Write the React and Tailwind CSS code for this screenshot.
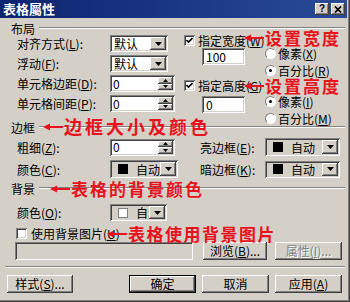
import React from "react";

const SUNKEN =
  "shadow-[inset_1px_1px_0_#808080,inset_-1px_-1px_0_#ffffff,inset_2px_2px_0_#404040,inset_-2px_-2px_0_#d4d0c8]";
const RAISED =
  "shadow-[inset_-1px_-1px_0_#404040,inset_1px_1px_0_#ffffff,inset_-2px_-2px_0_#808080,inset_2px_2px_0_#d4d0c8]";

const U = ({ children }) => <span className="underline">{children}</span>;

const Lbl = ({ children, className = "" }) => (
  <div className={`shrink-0 whitespace-nowrap leading-[13px] ${className}`}>{children}</div>
);

const DropBtn = () => (
  <div className={`${RAISED} bg-[#d4d0c8] w-[16px] h-full shrink-0 flex items-center justify-center`}>
    <svg width="7" height="4" viewBox="0 0 7 4">
      <path d="M0 0H7L3.5 4Z" fill="#000" />
    </svg>
  </div>
);

const Select = ({ className, children }) => (
  <div className={`${SUNKEN} bg-white p-[2px] flex shrink-0 ${className}`}>
    <div className="flex-1 flex items-center pl-[2px] whitespace-nowrap leading-[12px]">{children}</div>
    <DropBtn />
  </div>
);

const ColorSelect = ({ className, white = false }) => (
  <div className={`${SUNKEN} bg-[#d4d0c8] p-[2px] flex shrink-0 ${className}`}>
    <div
      className={`flex-1 min-w-0 flex items-center pl-[6px] whitespace-nowrap ${
        white ? "overflow-x-clip" : ""
      }`}
    >
      <div
        className={`w-[10px] h-[10px] shrink-0 ${
          white ? "bg-white border border-[#808080]" : "bg-black"
        }`}
      />
      <span className="ml-[8px] leading-[13px] shrink-0">自动</span>
    </div>
    <DropBtn />
  </div>
);

const Spinner = ({ className }) => (
  <div className={`${SUNKEN} bg-white p-[2px] flex shrink-0 ${className}`}>
    <div className="flex-1 flex items-center pl-[1px] leading-[12px]">0</div>
    <div className="w-[15px] flex flex-col">
      <div className={`${RAISED} bg-[#d4d0c8] flex-1 flex items-center justify-center`}>
        <svg width="5" height="3" viewBox="0 0 5 3">
          <path d="M2.5 0L5 3H0Z" fill="#000" />
        </svg>
      </div>
      <div className={`${RAISED} bg-[#d4d0c8] flex-1 flex items-center justify-center`}>
        <svg width="5" height="3" viewBox="0 0 5 3">
          <path d="M0 0H5L2.5 3Z" fill="#000" />
        </svg>
      </div>
    </div>
  </div>
);

const Check = ({ checked }) => (
  <div className={`${SUNKEN} bg-white w-[11px] h-[11px] shrink-0 flex items-center justify-center`}>
    {checked && (
      <svg width="7" height="7" viewBox="0 0 7 7">
        <path d="M0.5 3L2.5 5L6.5 1" stroke="#000" strokeWidth="1.6" fill="none" />
      </svg>
    )}
  </div>
);

const Radio = ({ checked }) => (
  <div className="w-[11px] h-[11px] shrink-0 rounded-full bg-white border border-t-[#808080] border-l-[#808080] border-b-white border-r-white flex items-center justify-center">
    {checked && <div className="w-[3px] h-[3px] rounded-full bg-black" />}
  </div>
);

const Button = ({ className, children, disabled = false, def = false }) => (
  <div className={`${def ? "border border-black" : ""} shrink-0 ${className}`}>
    <div
      className={`${RAISED} bg-[#d4d0c8] w-full h-full flex items-center justify-center leading-[12px] whitespace-nowrap ${
        disabled ? "text-[#808080] [text-shadow:1px_1px_0_#ffffff]" : ""
      }`}
    >
      {children}
    </div>
  </div>
);

const Header = ({ children, className = "" }) => (
  <div className={`h-[12px] flex items-center ${className}`}>
    <Lbl>{children}</Lbl>
    <div className="flex-1 ml-[4px] border-t border-t-[#808080] border-b border-b-white" />
  </div>
);

const Arrow = ({ w = 20 }) => (
  <svg width={w} height="10" viewBox={`0 0 ${w} 10`} className="shrink-0">
    <path d="M0 5L7 1.5L7 8.5Z" fill="#e8121c" />
    <path d={`M5 5H${w}`} stroke="#e8121c" strokeWidth="2" />
  </svg>
);

const Note = ({ className, text, tracking = "tracking-[2px]", size = "text-[17px]", w = 20 }) => (
  <div className={`absolute flex items-center text-[#e8121c] font-bold ${className}`}>
    <Arrow w={w} />
    <span className={`${size} ${tracking} leading-[17px] ml-[1px] whitespace-nowrap`}>{text}</span>
  </div>
);

export default function App() {
  return (
    <div className="relative w-[350px] h-[302px] overflow-hidden bg-[#d4d0c8] text-[12px] text-black font-['Noto_Sans_CJK_SC','Liberation_Sans',sans-serif] shadow-[inset_-1px_-1px_0_#404040,inset_-2px_-2px_0_#808080]">
      {/* Title bar */}
      <div className="h-[18px] mr-[3px] bg-linear-to-r from-[#0c2470] to-[#2a4a98] flex items-center pl-[3px] pr-[2px]">
        <span className="flex-1 text-white font-bold text-[13px] leading-[18px]">表格屬性</span>
        <div className={`${RAISED} bg-[#d4d0c8] w-[14px] h-[12px] flex items-center justify-center`}>
          <span className="font-bold text-[10px] leading-[10px] font-['Liberation_Sans',sans-serif]">?</span>
        </div>
        <div className={`${RAISED} bg-[#d4d0c8] w-[14px] h-[12px] ml-[2px] flex items-center justify-center`}>
          <svg width="8" height="7" viewBox="0 0 8 7">
            <path d="M1 0.5L7 6.5M7 0.5L1 6.5" stroke="#000" strokeWidth="1.7" />
          </svg>
        </div>
      </div>

      <div className="pl-[11px] pr-[5px]">
        {/* 布局 */}
        <Header className="mt-[4px]">布局</Header>
        <div className="h-[87px] flex">
          {/* left */}
          <div className="w-[173px] pl-[6px] flex flex-col">
            <div className="mt-[1px] h-[17px] flex items-center">
              <Lbl className="w-[93px]">
                对齐方式(<U>L</U>):
              </Lbl>
              <Select className="w-[58px] h-[17px]">默认</Select>
            </div>
            <div className="mt-[3px] h-[17px] flex items-center">
              <Lbl className="w-[93px]">
                浮动(<U>F</U>):
              </Lbl>
              <Select className="w-[58px] h-[17px]">默认</Select>
            </div>
            <div className="mt-[3px] h-[17px] flex items-center">
              <Lbl className="w-[93px]">
                单元格边距(<U>D</U>):
              </Lbl>
              <Spinner className="w-[65px] h-[17px]" />
            </div>
            <div className="mt-[3px] h-[17px] flex items-center">
              <Lbl className="w-[93px]">
                单元格间距(<U>P</U>):
              </Lbl>
              <Spinner className="w-[65px] h-[17px]" />
            </div>
          </div>
          {/* right */}
          <div className="flex flex-col">
            <div className="h-[12px] flex items-center">
              <Check checked />
              <Lbl className="ml-[3px]">
                指定宽度(<U>W</U>)
              </Lbl>
            </div>
            <div className="mt-[1px] flex">
              <div className="pl-[18px]">
                <div className={`${SUNKEN} bg-white w-[43px] h-[17px] mt-[1px] p-[2px] pl-[4px] flex items-center leading-[12px]`}>100</div>
              </div>
              <div className="ml-[20px] flex flex-col gap-[5px]">
                <div className="h-[12px] flex items-center">
                  <Radio />
                  <Lbl className="ml-[2px]">
                    像素(<U>X</U>)
                  </Lbl>
                </div>
                <div className="h-[12px] flex items-center">
                  <Radio checked />
                  <Lbl className="ml-[2px]">
                    百分比(<U>R</U>)
                  </Lbl>
                </div>
              </div>
            </div>
            <div className="mt-[3px] h-[12px] flex items-center">
              <Check checked />
              <Lbl className="ml-[3px]">
                指定高度(<U>G</U>)
              </Lbl>
            </div>
            <div className="mt-[4px] flex">
              <div className="pl-[18px]">
                <div className={`${SUNKEN} bg-white w-[43px] h-[17px] mt-[1px] p-[2px] pl-[4px] flex items-center leading-[12px]`}>0</div>
              </div>
              <div className="ml-[20px] flex flex-col gap-[5px]">
                <div className="h-[12px] flex items-center">
                  <Radio checked />
                  <Lbl className="ml-[2px]">
                    像素(<U>I</U>)
                  </Lbl>
                </div>
                <div className="h-[12px] flex items-center">
                  <Radio />
                  <Lbl className="ml-[2px]">
                    百分比(<U>M</U>)
                  </Lbl>
                </div>
              </div>
            </div>
          </div>
        </div>

        {/* 边框 */}
        <Header>边框</Header>
        <div className="mt-[5px] h-[18px] flex items-center pl-[6px]">
          <Lbl className="w-[93px]">
            粗细(<U>Z</U>):
          </Lbl>
          <Spinner className="w-[65px] h-[17px]" />
          <Lbl className="ml-[25px] w-[65px]">
            亮边框(<U>E</U>):
          </Lbl>
          <ColorSelect className="w-[75px] h-[18px]" />
        </div>
        <div className="mt-[4px] h-[18px] flex items-center pl-[6px]">
          <Lbl className="w-[93px]">
            颜色(<U>C</U>):
          </Lbl>
          <ColorSelect className="w-[68px] h-[18px]" />
          <Lbl className="ml-[22px] w-[65px]">
            暗边框(<U>K</U>):
          </Lbl>
          <ColorSelect className="w-[75px] h-[17px]" />
        </div>

        {/* 背景 */}
        <Header className="mt-[4px]">背景</Header>
        <div className="mt-[10px] h-[17px] flex items-center pl-[6px]">
          <Lbl className="w-[93px]">
            颜色(<U>O</U>):
          </Lbl>
          <ColorSelect className="w-[57px] h-[17px]" white />
        </div>
        <div className="mt-[6px] h-[12px] flex items-center pl-[5px]">
          <Check />
          <Lbl className="ml-[4px]">
            使用背景图片(<U>U</U>)
          </Lbl>
        </div>
        <div className="mt-[3px] h-[18px] flex">
          <div className={`${SUNKEN} bg-[#d4d0c8] ml-[4px] w-[178px] h-[18px]`} />
          <Button className="ml-[10px] w-[64px] h-[18px]">
            浏览(<U>B</U>)...
          </Button>
          <Button className="ml-[8px] w-[67px] h-[18px]" disabled>
            属性(<U>I</U>)...
          </Button>
        </div>
        <div className="mt-[6px] -ml-[6px] w-[340px] border-t border-t-[#808080] border-b border-b-white" />
        <div className="mt-[7px] h-[18px] flex -ml-[4px]">
          <Button className="w-[66px] h-[18px]">
            样式(<U>S</U>)...
          </Button>
          <Button className="ml-[56px] w-[67px] h-[18px]" def>
            确定
          </Button>
          <Button className="ml-[6px] w-[67px] h-[18px]">取消</Button>
          <Button className="ml-[6px] w-[67px] h-[18px]">
            应用(<U>A</U>)
          </Button>
        </div>
      </div>

      {/* Red annotations overlaid on the screenshot */}
      <Note className="left-[244px] top-[29px]" text="设置宽度" />
      <Note className="left-[244px] top-[77px]" text="设置高度" />
      <Note className="left-[43px] top-[118px]" text="边框大小及颜色" size="text-[18px]" tracking="tracking-[3px]" />
      <Note className="left-[50px] top-[180px]" text="表格的背景颜色" />
      <Note className="left-[107px] top-[225px]" text="表格使用背景图片" tracking="tracking-[1.5px]" />
    </div>
  );
}
